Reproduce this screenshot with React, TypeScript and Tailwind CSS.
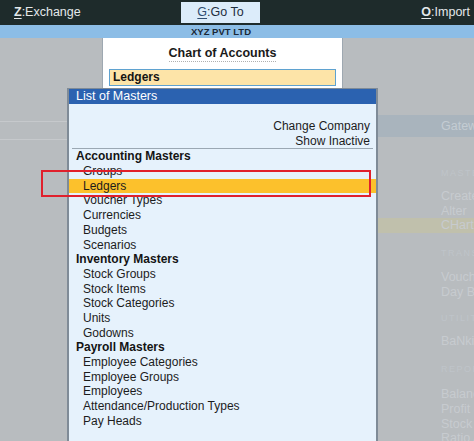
import React from "react";

const font = { fontFamily: '"Liberation Sans", Arial, sans-serif' };

function Item({ label, hl }: { label: string; hl?: boolean }) {
  return (
    <div className={`h-[14.7px] leading-[14.7px] pl-[14px] text-[12px] text-[#1c1c1c] ${hl ? "bg-[#fcc12c]" : ""}`}>
      {label}
    </div>
  );
}

function Head({ label }: { label: string }) {
  return <div className="h-[14.7px] leading-[14.7px] pl-[7px] text-[12px] font-bold text-[#141414]">{label}</div>;
}

function Ghost({ label, small, hl }: { label: string; small?: boolean; hl?: boolean }) {
  return (
    <div
      className={`pl-[63px] whitespace-nowrap overflow-hidden ${
        small
          ? "h-[12px] leading-[12px] text-[9px] tracking-[1.5px] text-[#bfc4c9]"
          : "h-[14.7px] leading-[14.7px] text-[12.5px] text-[#c7cbcf]"
      } ${hl ? "bg-[#c0c0ac]" : ""}`}
    >
      {label}
    </div>
  );
}

export default function App() {
  return (
    <div className="relative w-[474px] h-[441px] overflow-hidden bg-[#b8bcbf] flex flex-col" style={font}>
      {/* top bar */}
      <div className="h-[25px] bg-[#1e2b2b] flex items-center text-[12.5px] text-[#e4e8ea] shrink-0">
        <div className="w-[181px] pl-[14px]">
          <span className="underline underline-offset-2 font-bold">Z</span>
          <span>:Exchange</span>
        </div>
        <div className="w-[79px] h-[21px] bg-[#dcecfa] text-[#1e2e3e] flex items-center justify-center">
          <span className="underline underline-offset-2 text-[#2f4d70]">G</span>
          <span>:Go To</span>
        </div>
        <div className="flex-1 flex justify-end pr-[4px]">
          <span className="underline underline-offset-2 font-bold">O</span>
          <span>:Import</span>
        </div>
      </div>
      {/* company strip */}
      <div className="h-[13px] bg-[#8cbde6] flex items-center justify-center pr-[32px] shrink-0">
        <span className="text-[9.5px] font-bold text-[#1a2836] leading-none">XYZ PVT LTD</span>
      </div>
      {/* background */}
      <div className="flex-1 flex">
        <div className="flex-1 flex flex-col">
          <div className="h-[84px] border-b border-[#c6c9cc]" />
          <div className="h-[18px] border-b border-[#c6c9cc]" />
        </div>
        <div className="w-[96px] flex flex-col">
          <div className="h-[77px]" />
          <div className="h-[22px] bg-[#a9b4bd] leading-[22px] pl-[63px] text-[12.5px] text-[#c4ccd3] whitespace-nowrap overflow-hidden">
            Gateway of Tally
          </div>
          <div className="h-[30px]" />
          <Ghost label="MASTERS" small />
          <div className="h-[10px]" />
          <Ghost label="Create" />
          <Ghost label="Alter" />
          <Ghost label="CHart of Accounts" hl />
          <div className="h-[14px]" />
          <Ghost label="TRANSACTIONS" small />
          <div className="h-[11px]" />
          <Ghost label="Vouchers" />
          <Ghost label="Day Book" />
          <div className="h-[13px]" />
          <Ghost label="UTILITIES" small />
          <div className="h-[10px]" />
          <Ghost label="BaNking" />
          <div className="h-[14px]" />
          <Ghost label="REPORTS" small />
          <div className="h-[12px]" />
          <Ghost label="Balance Sheet" />
          <Ghost label="Profit & Loss A/c" />
          <Ghost label="Stock Summary" />
          <Ghost label="Ratio Analysis" />
        </div>
      </div>

      {/* Chart of Accounts popup */}
      <div className="absolute left-[102px] top-[38px] w-[241px] h-[52px] bg-white border-x border-[#9ea8b1]">
        <div className="flex justify-center pt-[8px]">
          <span className="text-[12.5px] font-bold text-[#1a1a1a] leading-[15px] border-b border-dotted border-[#b0b0b0]">
            Chart of Accounts
          </span>
        </div>
        <div className="mx-[6px] mt-[7px] h-[17px] bg-[#fde4a8] border border-[#5fa2d0] pl-[3px] text-[12px] font-bold text-[#141414] leading-[15px]">
          Ledgers
        </div>
      </div>

      {/* List of Masters popup */}
      <div className="absolute left-[67px] top-[88px] w-[311px] bottom-0 border-x-2 border-t border-[#7f8b97] bg-[#e6f2fc] flex flex-col">
        <div className="h-[15px] bg-[#2b62b0] text-white text-[12.5px] leading-[15px] pl-[7px]">List of Masters</div>
        <div className="h-[15px]" />
        <div className="flex flex-col items-end pr-[6px] text-[12px] text-[#1c1c1c]">
          <div className="h-[14.7px] leading-[14.7px]">Change Company</div>
          <div className="h-[14.7px] leading-[14.7px]">Show Inactive</div>
        </div>
        <div className="mx-[3px] border-b border-[#9ba8b3]" />
        <Head label="Accounting Masters" />
        <Item label="Groups" />
        <Item label="Ledgers" hl />
        <Item label="Voucher Types" />
        <Item label="Currencies" />
        <Item label="Budgets" />
        <Item label="Scenarios" />
        <Head label="Inventory Masters" />
        <Item label="Stock Groups" />
        <Item label="Stock Items" />
        <Item label="Stock Categories" />
        <Item label="Units" />
        <Item label="Godowns" />
        <Head label="Payroll Masters" />
        <Item label="Employee Categories" />
        <Item label="Employee Groups" />
        <Item label="Employees" />
        <Item label="Attendance/Production Types" />
        <Item label="Pay Heads" />
      </div>

      {/* red highlight box */}
      <div className="absolute left-[41px] top-[170px] w-[330px] h-[27px] border-2 border-[#e0202c]" />
    </div>
  );
}
